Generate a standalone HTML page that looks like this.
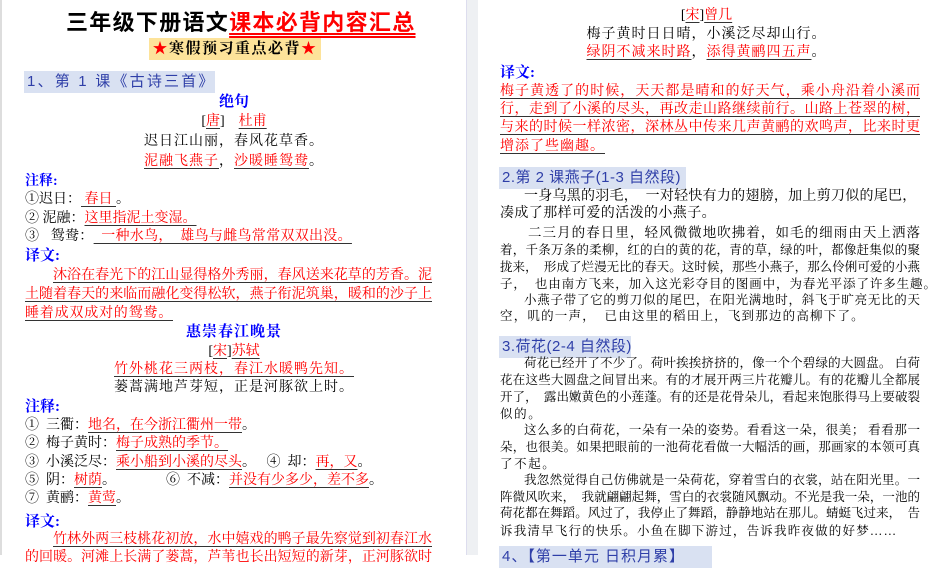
<!DOCTYPE html>
<html><head><meta charset="utf-8"><style>
*{margin:0;padding:0;box-sizing:border-box}
body{width:935px;height:555px;overflow:hidden;background:#fff;position:relative;font-family:"Liberation Serif","Noto Serif CJK SC",serif;color:#000}
.a{position:absolute;white-space:nowrap;line-height:20px}
.c{text-align:center}
.j{position:absolute;text-align:justify;text-align-last:justify;white-space:nowrap;line-height:18px}
.r{color:#f00}
.b{color:#00f;font-weight:bold}
.u{text-decoration:underline;text-decoration-color:#333;text-underline-offset:3px}
.h{position:absolute;background:#d9e1f2;color:#2f3fa8;font-family:"Liberation Sans","Noto Sans CJK SC",sans-serif;line-height:22px;padding-left:3px;white-space:nowrap}
</style></head><body>
<div style="position:absolute;left:0;top:0;width:2px;height:555px;background:#ddd"></div>
<div style="position:absolute;left:466px;top:0;width:12px;height:555px;background:#eef0f3;border-left:1px solid #dde"></div>

<!-- LEFT PAGE -->
<div class="a" style="left:66px;top:8px;font-size:22px;font-weight:bold;line-height:30px;letter-spacing:1.3px;font-family:'Liberation Serif','Noto Sans CJK SC',serif">三年级下册语文<span class="r" style="text-decoration:underline double;text-underline-offset:3px">课本必背内容汇总</span></div>
<div class="a" style="left:149px;top:38px;width:172px;height:22px;background:#fde39a;font-size:15px;font-weight:bold;text-align:center;line-height:22px;letter-spacing:1.5px"><span class="r">★</span>寒假预习重点必背<span class="r">★</span></div>
<div class="h" style="left:24px;top:71px;width:191px;font-size:15px;letter-spacing:2.2px">1、第 1 课《古诗三首》</div>
<div class="a c b" style="left:0;width:468px;top:92px;font-size:15px">绝句</div>
<div class="a c" style="left:0;width:468px;top:112px;font-size:14px">[<span class="r u">唐</span>]&nbsp;&nbsp;&nbsp; <span class="r u">杜甫</span></div>
<div class="a c" style="left:0;width:468px;top:132px;font-size:14px;letter-spacing:1px">迟日江山丽，春风花草香。</div>
<div class="a c" style="left:0;width:468px;top:152px;font-size:14px;letter-spacing:1px"><span class="r u">泥融飞燕子</span>，<span class="r u">沙暖睡鸳鸯</span>。</div>
<div class="a b" style="left:25px;top:172px;font-size:14px">注释:</div>
<div class="a" style="left:25px;top:190px;font-size:14px">①迟日：<span class="r u">&nbsp;春日&nbsp;</span>。</div>
<div class="a" style="left:25px;top:209px;font-size:14px">② 泥融：<span class="r u">这里指泥土变湿。 </span></div>
<div class="a" style="left:25px;top:227px;font-size:14px;letter-spacing:0.3px">③&nbsp;&nbsp; 鸳鸯：<span class="r u">&nbsp; 一种水鸟，&nbsp; 雄鸟与雌鸟常常双双出没。 </span></div>
<div class="a b" style="left:25px;top:246px;font-size:15px">译文:</div>
<div class="j r u" style="left:25px;width:407px;top:267px;font-size:14px;text-indent:28px">沐浴在春光下的江山显得格外秀丽，春风送来花草的芳香。泥</div>
<div class="j r u" style="left:25px;width:407px;top:286px;font-size:14px">土随着春天的来临而融化变得松软，燕子衔泥筑巢，暖和的沙子上</div>
<div class="a r u" style="left:25px;top:304px;font-size:14px;letter-spacing:0.8px">睡着成双成对的鸳鸯。</div>
<div class="a c b" style="left:0;width:468px;top:322px;font-size:15px;letter-spacing:1px">惠崇春江晚景</div>
<div class="a c" style="left:0;width:468px;top:342px;font-size:14px">[<span class="r u">宋</span>]<span class="r u">苏轼</span></div>
<div class="a c" style="left:0;width:468px;top:360px;font-size:14px;letter-spacing:1px"><span class="r u">竹外桃花三两枝，春江水暖鸭先知。</span></div>
<div class="a c" style="left:0;width:468px;top:378px;font-size:14px;letter-spacing:1px">蒌蒿满地芦芽短，正是河豚欲上时。</div>
<div class="a b" style="left:25px;top:397px;font-size:15px">注释:</div>
<div class="a" style="left:25px;top:416px;font-size:14px">①&nbsp; 三衢：<span class="r u">地名，在今浙江衢州一带</span>。</div>
<div class="a" style="left:25px;top:434px;font-size:14px">②&nbsp; 梅子黄时：<span class="r u">梅子成熟的季节。 </span></div>
<div class="a" style="left:25px;top:453px;font-size:14px">③&nbsp; 小溪泛尽：<span class="r u">乘小船到小溪的尽头</span>。&nbsp;&nbsp; ④&nbsp; 却：<span class="r u">再，又</span>。</div>
<div class="a" style="left:25px;top:471px;font-size:14px">⑤&nbsp; 阴：<span class="r u">树荫</span>。</div>
<div class="a" style="left:166px;top:471px;font-size:14px">⑥&nbsp; 不减：<span class="r u">并没有少多少，差不多</span>。</div>
<div class="a" style="left:25px;top:489px;font-size:14px">⑦&nbsp; 黄鹂：<span class="r u">黄莺</span>。</div>
<div class="a b" style="left:25px;top:512px;font-size:15px">译文:</div>
<div class="j r u" style="left:25px;width:407px;top:531px;font-size:14px;text-indent:28px">竹林外两三枝桃花初放，水中嬉戏的鸭子最先察觉到初春江水</div>
<div class="j r" style="left:25px;width:407px;top:549px;font-size:14px">的回暖。河滩上长满了蒌蒿，芦苇也长出短短的新芽，正河豚欲时</div>

<!-- RIGHT PAGE -->
<div class="a c" style="left:478px;width:457px;top:6px;font-size:14px">[<span class="r u">宋</span>]<span class="r u">曾几</span></div>
<div class="a c" style="left:478px;width:457px;top:25px;font-size:14px;letter-spacing:1px">梅子黄时日日晴，小溪泛尽却山行。</div>
<div class="a c" style="left:478px;width:457px;top:43px;font-size:14px;letter-spacing:1px"><span class="r u">绿阴不减来时路</span>，<span class="r u">添得黄鹂四五声</span>。</div>
<div class="a b" style="left:500px;top:63px;font-size:15px">译文:</div>
<div class="j r u" style="left:500px;width:420px;top:83px;font-size:14px">梅子黄透了的时候，天天都是晴和的好天气，乘小舟沿着小溪而</div>
<div class="j r u" style="left:500px;width:420px;top:101px;font-size:14px">行，走到了小溪的尽头，再改走山路继续前行。山路上苍翠的树，</div>
<div class="j r u" style="left:500px;width:420px;top:119px;font-size:14px">与来的时候一样浓密，深林丛中传来几声黄鹂的欢鸣声，比来时更</div>
<div class="a r u" style="left:500px;top:137px;font-size:14px;letter-spacing:1px">增添了些幽趣。</div>
<div class="h" style="left:499px;top:167px;width:187px;font-size:15px;letter-spacing:0.5px">2.第 2 课燕子(1-3 自然段)</div>
<div class="j" style="left:500px;width:420px;top:188px;font-size:14px;text-indent:24px">一身乌黑的羽毛，&nbsp; 一对轻快有力的翅膀，加上剪刀似的尾巴，&nbsp;</div>
<div class="a" style="left:500px;top:204px;font-size:14px;letter-spacing:0.4px">凑成了那样可爱的活泼的小燕子。</div>
<div class="j" style="left:500px;width:420px;top:224px;font-size:13.5px;text-indent:28px">二三月的春日里，轻风微微地吹拂着，如毛的细雨由天上洒落</div>
<div class="j" style="left:500px;width:420px;top:241px;font-size:12.5px">着，千条万条的柔柳，红的白的黄的花，青的草，绿的叶，都像赶集似的聚</div>
<div class="j" style="left:500px;width:420px;top:258px;font-size:12.5px">拢来，&nbsp; 形成了烂漫无比的春天。这时候，那些小燕子，那么伶俐可爱的小燕</div>
<div class="a" style="left:500px;top:274px;font-size:12.5px;letter-spacing:0.9px">子，&nbsp; 也由南方飞来，加入这光彩夺目的图画中，为春光平添了许多生趣。</div>
<div class="j" style="left:500px;width:420px;top:291px;font-size:12.5px;text-indent:24px">小燕子带了它的剪刀似的尾巴，在阳光满地时，斜飞于旷亮无比的天</div>
<div class="a" style="left:500px;top:306px;font-size:12.5px;letter-spacing:1.2px">空，叽的一声，&nbsp; 已由这里的稻田上，飞到那边的高柳下了。</div>
<div class="h" style="left:499px;top:336px;width:132px;font-size:15px;letter-spacing:0.5px">3.荷花(2-4 自然段)</div>
<div class="j" style="left:500px;width:420px;top:354px;font-size:12.5px;text-indent:24px">荷花已经开了不少了。荷叶挨挨挤挤的，像一个个碧绿的大圆盘。 白荷</div>
<div class="j" style="left:500px;width:420px;top:371px;font-size:12.5px">花在这些大圆盘之间冒出来。有的才展开两三片花瓣儿。有的花瓣儿全都展</div>
<div class="j" style="left:500px;width:420px;top:388px;font-size:12.5px">开了，&nbsp; 露出嫩黄色的小莲蓬。有的还是花骨朵儿，看起来饱胀得马上要破裂</div>
<div class="a" style="left:500px;top:404px;font-size:12.5px;letter-spacing:1.6px">似的。</div>
<div class="j" style="left:500px;width:420px;top:421px;font-size:12.5px;text-indent:24px">这么多的白荷花，一朵有一朵的姿势。看看这一朵，很美； 看看那一</div>
<div class="j" style="left:500px;width:420px;top:438px;font-size:12.5px">朵，也很美。如果把眼前的一池荷花看做一大幅活的画，那画家的本领可真</div>
<div class="a" style="left:500px;top:454px;font-size:12.5px;letter-spacing:1.6px">了不起。</div>
<div class="j" style="left:500px;width:420px;top:471px;font-size:12.5px;text-indent:24px">我忽然觉得自己仿佛就是一朵荷花，穿着雪白的衣裳，站在阳光里。一</div>
<div class="j" style="left:500px;width:420px;top:488px;font-size:12.5px">阵微风吹来，&nbsp; 我就翩翩起舞，雪白的衣裳随风飘动。不光是我一朵，一池的</div>
<div class="j" style="left:500px;width:420px;top:504px;font-size:12.5px">荷花都在舞蹈。风过了，我停止了舞蹈，静静地站在那儿。蜻蜓飞过来，&nbsp; 告</div>
<div class="a" style="left:500px;top:521px;font-size:12.5px;letter-spacing:1.2px">诉我清早飞行的快乐。小鱼在脚下游过，告诉我昨夜做的好梦……</div>
<div class="h" style="left:499px;top:546px;width:213px;font-size:15px;letter-spacing:1px">4、【第一单元 日积月累】</div>
</body></html>
